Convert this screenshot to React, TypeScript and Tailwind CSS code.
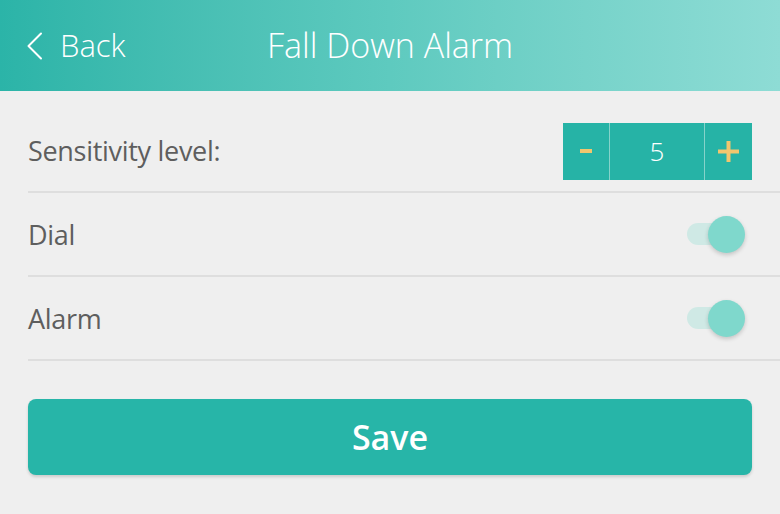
import { useState } from 'react';

function Toggle({ on, onChange }: { on: boolean; onChange: () => void }) {
  return (
    <button onClick={onChange} className="relative w-[60px] h-[40px] flex items-center">
      <span className="absolute left-[1px] w-[48px] h-[22px] rounded-full bg-[#cfe9e5]" />
      <span
        className={
          on
            ? 'absolute right-[1px] w-[37px] h-[37px] rounded-full bg-[#7fd8cc] shadow-[0_2px_4px_rgba(0,0,0,0.18)]'
            : 'absolute left-0 w-[37px] h-[37px] rounded-full bg-[#fafafa] shadow-[0_2px_4px_rgba(0,0,0,0.18)]'
        }
      />
    </button>
  );
}

export default function App() {
  const [level, setLevel] = useState(5);
  const [dial, setDial] = useState(true);
  const [alarm, setAlarm] = useState(true);

  return (
    <div
      className="w-[780px] h-[514px] bg-[#efefef] flex flex-col"
      style={{ fontFamily: '"Open Sans", "Noto Sans", sans-serif' }}
    >
      <header className="h-[91px] flex items-center bg-gradient-to-r from-[#2bb4a8] via-[#5ecabf] to-[#8edcd5] text-white relative">
        <button className="flex items-center pl-[26px] gap-[17px] text-[31px] font-light">
          <svg width="17" height="28" viewBox="0 0 17 28" fill="none" stroke="white" strokeWidth="2" strokeLinecap="round" strokeLinejoin="round">
            <path d="M15 1.5 L2.5 14 L15 26.5" />
          </svg>
          Back
        </button>
        <h1 className="absolute left-[267px] text-[34px] font-light">Fall Down Alarm</h1>
      </header>

      <div className="pl-[28px]">
        <div className="h-[102px] pt-[20px] flex items-center justify-between border-b-2 border-[#dedede] pr-[28px]">
          <span className="text-[27px] tracking-[-0.3px] text-[#5e5e5e]">Sensitivity level:</span>
          <div className="flex h-[57px] bg-[#26b3a6] text-white">
            <button
              onClick={() => setLevel(Math.max(1, level - 1))}
              className="w-[47px] flex items-center justify-center border-r border-[#86d3ca]"
            >
              <svg width="12" height="4" viewBox="0 0 12 4">
                <rect x="0" y="0" width="12" height="4" fill="#f2c66e" />
              </svg>
            </button>
            <span className="w-[94px] flex items-center justify-center text-[26px] font-light">{level}</span>
            <button
              onClick={() => setLevel(Math.min(10, level + 1))}
              className="w-[48px] flex items-center justify-center border-l border-[#86d3ca]"
            >
              <svg width="21" height="21" viewBox="0 0 21 21">
                <rect x="0" y="8.5" width="21" height="4" fill="#f2c66e" />
                <rect x="8.5" y="0" width="4" height="21" fill="#f2c66e" />
              </svg>
            </button>
          </div>
        </div>
        <div className="h-[84px] flex items-center justify-between border-b-2 border-[#dedede] pr-[34px]">
          <span className="text-[27px] tracking-[-0.3px] text-[#5e5e5e] mt-[3px]">Dial</span>
          <Toggle on={dial} onChange={() => setDial(!dial)} />
        </div>
        <div className="h-[84px] flex items-center justify-between border-b-2 border-[#dedede] pr-[34px]">
          <span className="text-[27px] tracking-[-0.3px] text-[#5e5e5e] mt-[3px]">Alarm</span>
          <Toggle on={alarm} onChange={() => setAlarm(!alarm)} />
        </div>
      </div>

      <div className="px-[28px] pt-[38px]">
        <button className="w-full h-[76px] rounded-[8px] bg-[#27b5a8] text-white text-[34px] font-semibold shadow-[0_2px_3px_rgba(0,0,0,0.15)]">
          Save
        </button>
      </div>
    </div>
  );
}
